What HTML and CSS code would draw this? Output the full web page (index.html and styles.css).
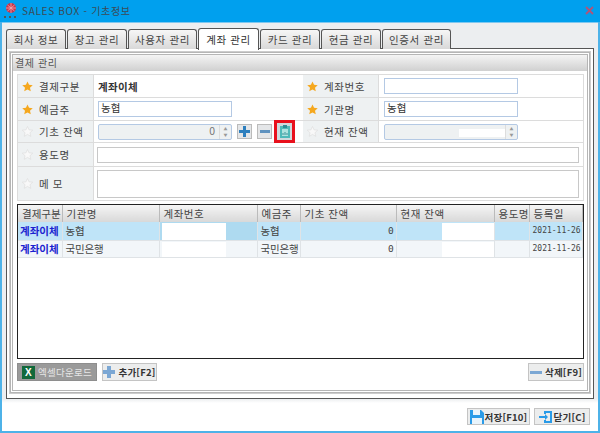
FILE: index.html
```html
<!DOCTYPE html>
<html lang="ko">
<head>
<meta charset="utf-8">
<title>SALES BOX - 기초정보</title>
<link rel="stylesheet" href="styles.css">
</head>
<body>
<div class="window">
  <header class="titlebar">
    <svg class="logo" width="16" height="18" viewBox="0 0 16 18"><circle cx="8" cy="6" r="5" fill="#c8354a"/><path d="M3 6h10M8 1v10M4.5 3l7 6M11.500 3l-7 6" stroke="#f3a9b3" stroke-width=".8"/><rect x="1" y="14" width="2" height="2" fill="#555"/><rect x="6" y="14" width="2" height="2" fill="#555"/><rect x="11" y="14" width="2" height="2" fill="#555"/></svg>
    <span class="title">SALES BOX - 기초정보</span>
    <svg class="close" width="9" height="9" viewBox="0 0 9 9"><path d="M1 1l7 7M8 1l-7 7" stroke="#b0557a" stroke-width="1.800"/></svg>
  </header>
  <div class="client">
    <nav class="tabs">
      <div class="tab t60">회사 정보</div>
      <div class="tab t60">창고 관리</div>
      <div class="tab t69">사용자 관리</div>
      <div class="tab t61 active">계좌 관리</div>
      <div class="tab t60">카드 관리</div>
      <div class="tab t60">현금 관리</div>
      <div class="tab t69">인증서 관리</div>
    </nav>
    <section class="tabpanel">
      <div class="group">
        <div class="grouphead">결제 관리</div>
        <div class="groupbody">
          <div class="form">
            <div class="row r23">
              <div class="lab"><svg class="star" viewBox="0 0 12 12"><path class="on" d="M6 .5l1.700 3.700 4 .4-3 2.700.9 4L6 9.200 2.400 11.300l.9-4-3-2.700 4-.4z"/></svg>결제구분</div>
              <div class="val left strong">계좌이체</div>
              <div class="lab"><svg class="star" viewBox="0 0 12 12"><path class="on" d="M6 .5l1.700 3.700 4 .4-3 2.700.9 4L6 9.200 2.400 11.300l.9-4-3-2.700 4-.4z"/></svg>계좌번호</div>
              <div class="val right"><div class="input"></div></div>
            </div>
            <div class="row r23">
              <div class="lab"><svg class="star" viewBox="0 0 12 12"><path class="on" d="M6 .5l1.700 3.700 4 .4-3 2.700.9 4L6 9.200 2.400 11.300l.9-4-3-2.700 4-.4z"/></svg>예금주</div>
              <div class="val left"><div class="input">농협</div></div>
              <div class="lab"><svg class="star" viewBox="0 0 12 12"><path class="on" d="M6 .5l1.700 3.700 4 .4-3 2.700.9 4L6 9.200 2.400 11.300l.9-4-3-2.700 4-.4z"/></svg>기관명</div>
              <div class="val right"><div class="input">농협</div></div>
            </div>
            <div class="row r22">
              <div class="lab"><svg class="star" viewBox="0 0 12 12"><path class="off" d="M6 .5l1.700 3.700 4 .4-3 2.700.9 4L6 9.200 2.400 11.300l.9-4-3-2.700 4-.4z"/></svg>기초 잔액</div>
              <div class="val left">
                <div class="input spin">0<span class="arrows"><i>▲</i><i>▼</i></span></div>
                <button class="mini"><svg width="11" height="11" viewBox="0 0 11 11"><path d="M4 0h3v4h4v3H7v4H4V7H0V4h4z" fill="#2d7fbe"/></svg></button>
                <button class="mini"><svg width="10" height="3" viewBox="0 0 10 3"><rect width="10" height="3" fill="#5f92bf"/></svg></button>
                <span class="marked"><button class="mini teal"><svg width="10" height="13" viewBox="0 0 10 13"><rect y="1" width="10" height="12" fill="#4fb9b9"/><rect x="3" width="4" height="3" fill="#2f8c96"/><rect x="2" y="4" width="6" height="7" fill="#aee3df"/><path d="M3 10V8M5 10V7M7 10V8" stroke="#3b8f98"/></svg></button></span>
              </div>
              <div class="lab"><svg class="star" viewBox="0 0 12 12"><path class="off" d="M6 .5l1.700 3.700 4 .4-3 2.700.9 4L6 9.200 2.400 11.300l.9-4-3-2.700 4-.4z"/></svg>현재 잔액</div>
              <div class="val right"><div class="input spin"><span class="hidebox"></span><span class="arrows"><i>▲</i><i>▼</i></span></div></div>
            </div>
            <div class="row r24">
              <div class="lab"><svg class="star" viewBox="0 0 12 12"><path class="off" d="M6 .5l1.700 3.700 4 .4-3 2.700.9 4L6 9.200 2.400 11.300l.9-4-3-2.700 4-.4z"/></svg>용도명</div>
              <div class="val wide"><div class="plain h16"></div></div>
            </div>
            <div class="row r33">
              <div class="lab"><svg class="star" viewBox="0 0 12 12"><path class="off" d="M6 .5l1.700 3.700 4 .4-3 2.700.9 4L6 9.200 2.400 11.300l.9-4-3-2.700 4-.4z"/></svg>메 모</div>
              <div class="val wide"><div class="plain h28"></div></div>
            </div>
          </div>
          <div class="gridwrap">
            <table class="grid">
              <colgroup><col class="c1"><col class="c2"><col class="c3"><col class="c4"><col class="c5"><col class="c6"><col class="c7"><col class="c8"></colgroup>
              <thead><tr><th>결제구분</th><th>기관명</th><th>계좌번호</th><th>예금주</th><th>기초 잔액</th><th>현재 잔액</th><th>용도명</th><th>등록일</th></tr></thead>
              <tbody>
                <tr class="sel"><td class="kind">계좌이체</td><td class="pad">농협</td><td class="acct"><span class="mask"></span></td><td>농협</td><td class="num">0</td><td class="cur"><span class="mask"></span></td><td></td><td class="date">2021-11-26</td></tr>
                <tr><td class="kind">계좌이체</td><td class="pad">국민은행</td><td class="acct"><span class="mask"></span></td><td>국민은행</td><td class="num">0</td><td class="cur"><span class="mask"></span></td><td></td><td class="date">2021-11-26</td></tr>
              </tbody>
            </table>
          </div>
          <div class="actions">
            <button class="btn excel"><span class="xl">X</span>엑셀다운로드</button>
            <button class="btn add"><svg width="12" height="12" viewBox="0 0 12 12"><path d="M4 0h4v4h4v4H8v4H4V8H0V4h4z" fill="#7ba7d4"/></svg>추가[F2]</button>
            <span class="grow"></span>
            <button class="btn del"><svg width="12" height="3" viewBox="0 0 12 3"><rect width="12" height="3" fill="#7ba7d4"/></svg>삭제[F9]</button>
          </div>
        </div>
      </div>
    </section>
    <footer class="foot">
      <button class="btn save"><svg width="14" height="14" viewBox="0 0 14 14"><path d="M0 0h11l3 3v11H0z" fill="#2a9be8"/><rect x="3" y="0" width="7" height="5" fill="#e8f4fc"/><rect x="2" y="8" width="10" height="6" fill="#e8f4fc"/></svg>저장[F10]</button>
      <button class="btn closebtn"><svg width="14" height="14" viewBox="0 0 14 14"><path d="M5 1h8v12H5v-3h2v1h4V3H7v1H5z" fill="#2a9be8"/><path d="M0 6h6V4l3 3-3 3V8H0z" fill="#2a9be8"/></svg>닫기[C]</button>
    </footer>
  </div>
</div>
</body>
</html>
```
FILE: styles.css
```css
* { box-sizing: border-box; }
html, body { margin: 0; padding: 0; }
body { width: 600px; height: 433px; overflow: hidden; font: 10px "Noto Sans CJK KR", "Liberation Sans", sans-serif; color: #333; }
.window { width: 600px; height: 433px; display: flex; flex-direction: column; background: #4db2e8; padding: 0 2px 2px; }
.titlebar { height: 22px; margin: 0 -2px; background: #00a0ee; display: flex; align-items: center; padding: 0 5px 1px 3px; color: #3c4a55; }
.logo { margin-right: 3px; }
.title { font-size: 10px; letter-spacing: .7px; flex: 1; }
.close { margin-right: 1px; }
.client { flex: 1; background: linear-gradient(#eceef0 0, #eceef0 376px, #fff 380px); display: flex; flex-direction: column; padding: 5px 4px 0; border-top: 1px solid #7fc8f0; }
.tabs { display: flex; gap: 1px; height: 20px; position: relative; z-index: 1; }
.tab { height: 20px; margin-top: 1px; background: linear-gradient(#f6f6f6, #d9d9d9); border: 1px solid #555; border-bottom: 0; border-radius: 3px 3px 0 0; display: flex; align-items: center; justify-content: center; font-size: 10.500px; letter-spacing: .6px; color: #444; white-space: nowrap; }
.t60 { width: 60px; }
.t69 { width: 69px; }
.t61 { width: 61px; }
.tab.active { margin-top: 0; height: 22px; background: #fff; color: #333; }
.tabpanel { height: 351px; background: #fff; border: 1px solid #555; padding: 3px; }
.group { height: 341px; border: 3px double #b5b5b5; outline: 1px solid #ccc; }
.grouphead { height: 16px; background: linear-gradient(#f4f4f4, #d0d0d0); padding: 0 2px; font-size: 10px; letter-spacing: .6px; line-height: 15px; color: #555; }
.groupbody { padding: 3px 3px 0 4px; }
.form { border: 1px solid #dcdcdc; border-bottom: 0; height: 127px; }
.row { display: flex; border-bottom: 1px solid #dcdcdc; }
.r23 { height: 23px; }
.r22 { height: 22px; }
.r24 { height: 24px; }
.r33 { height: 34px; }
.lab { width: 76px; background: #eef1f2; border-right: 1px solid #dcdcdc; display: flex; align-items: center; padding-left: 4px; font-size: 10.500px; letter-spacing: .6px; color: #444; }
.star { width: 11px; height: 11px; margin-right: 6px; flex: none; }
.on { fill: #f5a81f; }
.off { fill: #f8f8f8; stroke: #ddd; stroke-width: .7; }
.val { display: flex; align-items: center; padding-left: 5px; gap: 5px; }
.left { width: 209px; padding-left: 4px; }
.right { flex: 1; }
.wide { flex: 1; padding-left: 3px; padding-right: 4px; }
.strong { font-weight: 700; font-size: 10.500px; letter-spacing: .3px; }
.input { width: 134px; height: 16px; background: #fff; border: 1px solid #b4c9e4; font-size: 10.500px; line-height: 12px; padding-left: 2px; color: #333; }
.spin { position: relative; background: #eef1f2; text-align: right; padding-right: 16px; color: #777; border-radius: 2px; }
.arrows { position: absolute; right: 0; top: 0; bottom: 0; width: 12px; border-left: 1px solid #ddd; display: flex; flex-direction: column; justify-content: center; align-items: center; }
.arrows i { font-style: normal; font-size: 4px; line-height: 6px; color: #999; }
.hidebox { position: absolute; right: 11px; top: 4px; width: 47px; height: 8px; background: #fff; }
.mini { width: 15px; height: 15px; padding: 0; background: #e4e6e8; border: 1px solid #bbb; display: flex; align-items: center; justify-content: center; flex: none; }
.marked { width: 21px; height: 23px; margin-left: -3px; border: 3px solid #e8101c; display: flex; align-items: center; justify-content: center; flex: none; }
.teal { border: 0; height: 17px; width: 15px; background: #cfd9dc; }
.plain { width: 100%; background: #fff; border: 1px solid #c8c8c8; }
.h16 { height: 16px; }
.h28 { height: 28px; }
.gridwrap { margin-top: 3px; height: 155px; border: 1px solid #222; }
.grid { width: 100%; border-collapse: collapse; table-layout: fixed; font-size: 10.500px; }
.c1 { width: 44px; }
.c2 { width: 97px; }
.c3 { width: 98px; }
.c4 { width: 43px; }
.c5 { width: 96px; }
.c6 { width: 98px; }
.c7 { width: 35px; }
th { height: 17px; background: linear-gradient(#f5f5f5, #d8d8d8); border-right: 1px solid #bbb; font-weight: 400; letter-spacing: .5px; text-align: left; padding: 0 4px; color: #444; overflow: hidden; white-space: nowrap; }
th:first-child { padding: 0 1px 0 4px; letter-spacing: 0; }
td { height: 17px; padding: 0 1px 0 3px; border-right: 1px solid #dfe3e6; border-bottom: 1px solid #dfe3e6; background: #f2f6f9; white-space: nowrap; overflow: hidden; color: #444; position: relative; letter-spacing: -.2px; }
.sel td { height: 18px; background: #bfe4f8; }
td.kind { color: #1c1fd0; font-weight: 700; letter-spacing: 0; padding: 0 0 0 2px; }
td.pad { padding-left: 3px; }
.num { text-align: right; padding-right: 2px; font-family: "DejaVu Sans Mono", monospace; font-size: 9.500px; }
td.date { font-family: "DejaVu Sans Mono", monospace; font-size: 8px; padding-left: 3px; letter-spacing: 0; }
.mask { position: absolute; top: 1px; bottom: 0; background: #fff; }
.acct .mask { left: 2px; width: 64px; }
.sel .acct { background: #aedaf0; }
.cur .mask { left: 45px; width: 52px; }
.actions { display: flex; align-items: center; margin-top: 4px; gap: 5px; }
.grow { flex: 1; }
.btn { height: 18px; padding: 0; background: #eceded; border: 1px solid #c4c4c4; display: inline-flex; align-items: center; justify-content: center; gap: 3px; font: 700 9.500px "Noto Sans CJK KR", sans-serif; color: #333; letter-spacing: .2px; white-space: nowrap; }
.excel { width: 80px; background: #9a9a9a; border-color: #8e8e8e; color: #e6e6e6; font-weight: 400; letter-spacing: .3px; }
.xl { width: 13px; height: 13px; background: #11693b; color: #fff; font-weight: 700; font-size: 10px; line-height: 13px; text-align: center; font-family: "Liberation Sans", sans-serif; }
.add { width: 55px; }
.del { width: 56px; }
.foot { flex: 1; display: flex; justify-content: flex-end; align-items: flex-start; gap: 4px; padding: 9px 4px 0 0; }
.save { width: 63px; height: 17px; gap: 1px; }
.closebtn { width: 56px; height: 17px; gap: 1px; }
```
